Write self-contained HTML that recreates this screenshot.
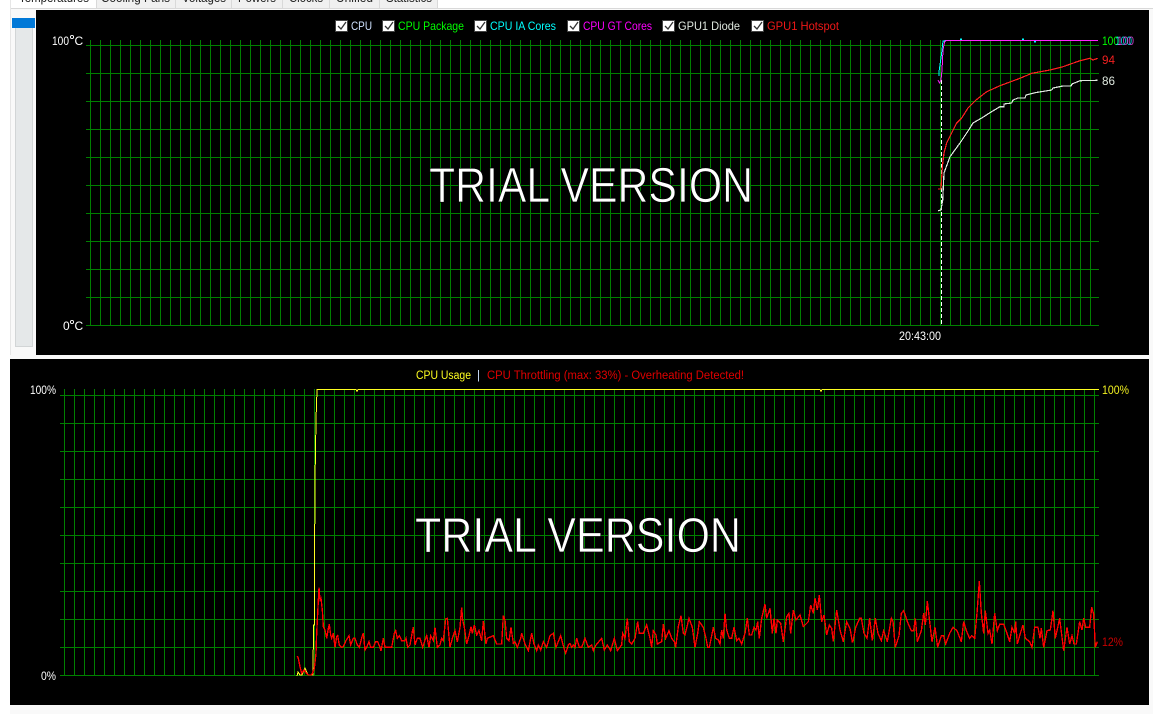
<!DOCTYPE html>
<html><head><meta charset="utf-8"><title>Sensor graphs</title>
<style>
html,body{margin:0;padding:0;background:#fff;}
#r{position:relative;width:1153px;height:714px;overflow:hidden;background:#f9f9f9;font-family:"Liberation Sans",sans-serif;}
.a{position:absolute;}
svg{position:absolute;left:0;top:0;}
text{font-family:"Liberation Sans",sans-serif;font-size:12px;}
.t{font-size:12.5px;fill:#222;}
.tr{font-size:49px;fill:#fff;stroke:#000;stroke-width:.7px;}
</style></head><body>
<div id="r">
<div class="a" style="left:0;top:0;width:10px;height:714px;background:#fff"></div>
<div class="a" style="left:0;top:0;width:1153px;height:9px;background:#fff"></div>
<div class="a" style="left:10px;top:8px;width:1143px;height:1px;background:#d9d9d9"></div>
<div class="a" style="left:10px;top:0;width:1px;height:355px;background:#e6e6e6"></div>
<div class="a" style="left:96px;top:0;width:79px;height:8px;background:#f0f0f0;border-left:1px solid #d9d9d9"></div>
<div class="a" style="left:175px;top:0;width:56px;height:8px;background:#f0f0f0;border-left:1px solid #d9d9d9"></div>
<div class="a" style="left:231px;top:0;width:51px;height:8px;background:#f0f0f0;border-left:1px solid #d9d9d9"></div>
<div class="a" style="left:282px;top:0;width:47px;height:8px;background:#f0f0f0;border-left:1px solid #d9d9d9"></div>
<div class="a" style="left:329px;top:0;width:50px;height:8px;background:#f0f0f0;border-left:1px solid #d9d9d9"></div>
<div class="a" style="left:379px;top:0;width:57px;height:8px;background:#f0f0f0;border-left:1px solid #d9d9d9;border-right:1px solid #d9d9d9"></div>
<div class="a" style="left:12px;top:18px;width:23px;height:10px;background:#0078d7"></div>
<div class="a" style="left:15px;top:28px;width:16px;height:318px;background:#e5e8e9;border:1px solid #d2d5d6;border-top:0"></div>

<div class="a" style="left:36px;top:10px;width:1113px;height:345px;background:#000"></div>
<div class="a" style="left:10px;top:359px;width:1139px;height:346px;background:#000"></div>

<svg width="1153" height="714" viewBox="0 0 1153 714">
<g fill="none" stroke="#008000" stroke-width="1" shape-rendering="crispEdges">
<path d="M90.5 40v285
m10-285v285m10-285v285m10-285v285m10-285v285m10-285v285m10-285v285m10-285v285m10-285v285m10-285v285m10-285v285
m10-285v285m10-285v285m10-285v285m10-285v285m10-285v285m10-285v285m10-285v285m10-285v285m10-285v285m10-285v285
m10-285v285m10-285v285m10-285v285m10-285v285m10-285v285m10-285v285m10-285v285m10-285v285m10-285v285m10-285v285
m10-285v285m10-285v285m10-285v285m10-285v285m10-285v285m10-285v285m10-285v285m10-285v285m10-285v285m10-285v285
m10-285v285m10-285v285m10-285v285m10-285v285m10-285v285m10-285v285m10-285v285m10-285v285m10-285v285m10-285v285
m10-285v285m10-285v285m10-285v285m10-285v285m10-285v285m10-285v285m10-285v285m10-285v285m10-285v285m10-285v285
m10-285v285m10-285v285m10-285v285m10-285v285m10-285v285m10-285v285m10-285v285m10-285v285m10-285v285m10-285v285
m10-285v285m10-285v285m10-285v285m10-285v285m10-285v285m10-285v285m10-285v285m10-285v285m10-285v285m10-285v285
m10-285v285m10-285v285m10-285v285m10-285v285m10-285v285m10-285v285m10-285v285m10-285v285m10-285v285m10-285v285
m10-285v285m10-285v285m10-285v285m10-285v285m10-285v285m10-285v285m10-285v285m10-285v285m10-285v285m10-285v285"/>
<path d="M86 45.5h1013m-1013 28h1013m-1013 28h1013m-1013 28h1013m-1013 28h1013m-1013 28h1013m-1013 28h1013m-1013 28h1013m-1013 28h1013m-1013 28h1013m-1013 28h1013"/>
<path d="M64.5 389v286
m10-286v286m10-286v286m10-286v286m10-286v286m10-286v286m10-286v286m10-286v286m10-286v286m10-286v286m10-286v286
m10-286v286m10-286v286m10-286v286m10-286v286m10-286v286m10-286v286m10-286v286m10-286v286m10-286v286m10-286v286
m10-286v286m10-286v286m10-286v286m10-286v286m10-286v286m10-286v286m10-286v286m10-286v286m10-286v286m10-286v286
m10-286v286m10-286v286m10-286v286m10-286v286m10-286v286m10-286v286m10-286v286m10-286v286m10-286v286m10-286v286
m10-286v286m10-286v286m10-286v286m10-286v286m10-286v286m10-286v286m10-286v286m10-286v286m10-286v286m10-286v286
m10-286v286m10-286v286m10-286v286m10-286v286m10-286v286m10-286v286m10-286v286m10-286v286m10-286v286m10-286v286
m10-286v286m10-286v286m10-286v286m10-286v286m10-286v286m10-286v286m10-286v286m10-286v286m10-286v286m10-286v286
m10-286v286m10-286v286m10-286v286m10-286v286m10-286v286m10-286v286m10-286v286m10-286v286m10-286v286m10-286v286
m10-286v286m10-286v286m10-286v286m10-286v286m10-286v286m10-286v286m10-286v286m10-286v286m10-286v286m10-286v286
m10-286v286m10-286v286m10-286v286m10-286v286m10-286v286m10-286v286m10-286v286m10-286v286m10-286v286m10-286v286
m10-286v286m10-286v286m10-286v286"/>
<path d="M60 395.5h1039m-1039 28h1039m-1039 28h1039m-1039 28h1039m-1039 28h1039m-1039 28h1039m-1039 28h1039m-1039 28h1039m-1039 28h1039m-1039 28h1039m-1039 28h1039"/>
</g>
<g class="tabs">
<text class="t" x="19" y="2" textLength="70" lengthAdjust="spacingAndGlyphs">Temperatures</text>
<text class="t" x="101" y="2" textLength="69" lengthAdjust="spacingAndGlyphs">Cooling Fans</text>
<text class="t" x="182" y="2" textLength="44" lengthAdjust="spacingAndGlyphs">Voltages</text>
<text class="t" x="238" y="2" textLength="38" lengthAdjust="spacingAndGlyphs">Powers</text>
<text class="t" x="289" y="2" textLength="34" lengthAdjust="spacingAndGlyphs">Clocks</text>
<text class="t" x="336" y="2" textLength="37" lengthAdjust="spacingAndGlyphs">Unified</text>
<text class="t" x="386" y="2" textLength="46" lengthAdjust="spacingAndGlyphs">Statistics</text>
</g>

<text class="tr" x="429" y="202" textLength="324" lengthAdjust="spacingAndGlyphs">TRIAL VERSION</text>
<text class="tr" x="415" y="552" textLength="326" lengthAdjust="spacingAndGlyphs">TRIAL VERSION</text>

<g fill="#fff" stroke="#444" stroke-width="1" shape-rendering="crispEdges">
<rect x="335.5" y="20.5" width="12" height="11"/><rect x="382.5" y="20.5" width="12" height="11"/><rect x="474.5" y="20.5" width="12" height="11"/><rect x="567.5" y="20.5" width="12" height="11"/><rect x="662.5" y="20.5" width="12" height="11"/><rect x="751.5" y="20.5" width="12" height="11"/>
</g>
<g fill="none" stroke="#333" stroke-width="1.3">
<path d="M338 26l3 3 5-7"/><path d="M385 26l3 3 5-7"/><path d="M477 26l3 3 5-7"/><path d="M570 26l3 3 5-7"/><path d="M665 26l3 3 5-7"/><path d="M754 26l3 3 5-7"/>
</g>
<text x="351" y="30" fill="#cfe2ff" textLength="21" lengthAdjust="spacingAndGlyphs">CPU</text>
<text x="398" y="30" fill="#00ff00" textLength="66" lengthAdjust="spacingAndGlyphs">CPU Package</text>
<text x="490" y="30" fill="#00ffff" textLength="66" lengthAdjust="spacingAndGlyphs">CPU IA Cores</text>
<text x="583" y="30" fill="#ff00ff" textLength="69" lengthAdjust="spacingAndGlyphs">CPU GT Cores</text>
<text x="678" y="30" fill="#dfe8df" textLength="62" lengthAdjust="spacingAndGlyphs">GPU1 Diode</text>
<text x="767" y="30" fill="#f01818" textLength="72" lengthAdjust="spacingAndGlyphs">GPU1 Hotspot</text>

<text x="52" y="45" fill="#fff" textLength="17" lengthAdjust="spacingAndGlyphs">100</text>
<circle cx="72" cy="37" r="1.6" fill="none" stroke="#fff" stroke-width=".9"/><text x="74.5" y="45" fill="#fff">C</text>
<text x="63" y="330" fill="#fff">0</text>
<circle cx="72" cy="322" r="1.6" fill="none" stroke="#fff" stroke-width=".9"/><text x="74.5" y="330" fill="#fff">C</text>
<text x="899" y="340" fill="#fff" textLength="42" lengthAdjust="spacingAndGlyphs">20:43:00</text>

<text x="1102" y="45" fill="#00ff00" textLength="17" lengthAdjust="spacingAndGlyphs">100</text>
<text x="1115" y="45" fill="#00ffff" textLength="17" lengthAdjust="spacingAndGlyphs" opacity=".8">100</text>
<text x="1117" y="45" fill="#ff50ff" textLength="17" lengthAdjust="spacingAndGlyphs" opacity=".75">100</text>
<text x="1102" y="64" fill="#f02020" textLength="13" lengthAdjust="spacingAndGlyphs">94</text>
<text x="1102" y="85" fill="#dfe8df" textLength="13" lengthAdjust="spacingAndGlyphs">86</text>

<text x="416" y="379" fill="#ffff20" style="font-size:11.5px" textLength="55" lengthAdjust="spacingAndGlyphs">CPU Usage</text>
<text x="477" y="379" fill="#cfe2ff" style="font-size:11.5px">|</text>
<text x="487" y="379" fill="#e00000" style="font-size:11.5px" textLength="257" lengthAdjust="spacingAndGlyphs">CPU Throttling (max: 33%) - Overheating Detected!</text>
<text x="30" y="394" fill="#fff" textLength="26" lengthAdjust="spacingAndGlyphs">100%</text>
<text x="41" y="680" fill="#fff" textLength="15" lengthAdjust="spacingAndGlyphs">0%</text>
<text x="1102" y="394" fill="#f0f020" textLength="27" lengthAdjust="spacingAndGlyphs">100%</text>
<text x="1102" y="646" fill="#c80000" textLength="21" lengthAdjust="spacingAndGlyphs">12%</text>

<g fill="none" shape-rendering="crispEdges">
<path d="M941.5 80V325" stroke="#fff" stroke-width="1" stroke-dasharray="4 2"/>
<polyline stroke="#ff2020" stroke-width="1.2" points="938,189 941,189 941.5,180 942.5,165 944,153 946.7,143 951.7,133 956.7,123 961.7,118 968,108 976,100 986.7,91.7 1000,85.7 1020,78.3 1031.7,73.3 1050,70 1063,66.7 1080,60.7 1090,58.3 1093,60 1097.7,58.3"/>
<polyline stroke="#dfe8df" stroke-width="1.2" points="938,210.7 941,210 942.7,200 944,173 950,156.7 960,143 970,128 973,123 981.7,118 990,112.7 1000,106.7 1004,106.7 1004,104 1011.7,103 1013,100 1018,98 1025,98 1026,95 1035,92.7 1051.7,90 1053,88 1063,86 1071,86 1072,84 1080,80.7 1097.7,80.3"/>
<polyline stroke="#00ffff" points="939,76 939,72 940,65 941,58 942,50 943,41 946,40.5 960,40.5 961,38.5 962,40.5 1022,40.5 1023,38.5 1024,40.5 1034,40.5 1035,42.5 1036,40.5 1098,40.5"/>
<polyline stroke="#ff20ff" stroke-width="1" points="938,80 939.5,83 941,80 942,70 943,50 944.5,42 946,40.5 1098,40.5"/>
<polyline stroke="#ffff20" points="297,676 298,672 300,675 302,675 305,668 308,675 313,675 313.5,625 314.5,625 314.5,570 315,480 316,420 317,389.5 356,389.5 357,391.5 358,389.5 820,389.5 821,391.5 822,389.5 1099,389.5"/>
</g>
<g fill="none" stroke="#ff0000" stroke-width="4" shape-rendering="crispEdges">
<polyline transform="translate(280,570) scale(.33333)" points="52,258 55,265 60,290 65,310 72,300 80,310 85,315 95,315 103,295 108,250 110,190 113,130 117,52 120,90 123,85 127,120 130,170 135,180 140,205 145,175 148,163 152,195 155,205 160,190 165,232 170,200 173,197 178,225 185,232 190,230 198,212 207,197 212,225 220,205 225,205 232,225 238,232 247,197 250,190 255,240 260,232 267,215 272,232 280,232 287,215 293,215 300,232 303,243 310,205 315,232 335,232 343,190 347,182 352,205 358,197 365,212 375,212 378,205 383,232 390,225 397,185 400,172 405,225 412,205 420,205 428,232 437,205 440,197 447,232 452,197 460,212 465,172 472,232 480,225 485,205 490,212 497,147 502,145 510,232 517,205 525,182 532,215 540,172 545,112 548,150 553,172 560,222 567,197 573,170 577,190 583,165 590,195 597,182 605,212 610,153 618,222 622,205 640,197 650,222 665,222 670,137 675,150 680,205 687,212 693,172 700,220 705,215 712,232 722,205 725,190 735,222 745,242 755,190 762,222 770,242 775,225 782,240 790,215 800,232 810,197 820,190 828,232 842,197 852,235 857,250 865,225 870,220"/>
<polyline transform="translate(570,570) scale(.33333)" points="0,220 5,232 10,225 15,232 20,205 28,232 35,232 45,205 55,232 65,225 70,242 78,225 95,205 103,240 112,225 122,242 133,205 142,242 155,225 158,190 165,205 172,145 178,215 185,222 195,205 203,155 208,190 220,190 230,165 240,205 245,232 250,182 258,195 262,222 275,215 280,162 287,205 297,182 305,205 313,215 317,232 325,170 333,137 340,190 345,195 357,145 367,172 375,232 383,190 388,155 400,172 408,205 413,232 418,232 430,172 437,205 445,210 450,222 455,180 460,205 465,130 470,180 478,205 485,205 492,172 500,212 507,205 515,222 525,190 532,145 538,195 545,195 552,172 558,180 563,155 568,205 575,145 585,102 590,145 600,115 607,190 612,145 618,190 622,150 632,160 640,215 650,140 657,130 662,190 670,120 678,150 690,135 700,170 715,155 722,105 730,130 735,85 742,120 748,75 755,155 762,135 770,195 778,165 785,175 790,215 800,120 810,180 820,215 830,155 840,175 847,215 849,215"/>
<polyline transform="translate(853,570) scale(.33333)" points="-4,215 0,215 8,172 20,145 25,145 33,190 42,205 50,145 58,212 67,145 75,190 85,212 92,182 103,215 115,145 120,155 127,232 138,197 145,130 152,122 165,160 175,182 182,182 187,145 193,215 205,182 212,130 217,165 223,93 230,155 237,215 246,172 254,232 265,197 272,197 278,222 290,190 300,172 312,182 325,215 332,155 340,182 350,205 356,197 365,205 372,130 379,33 385,130 392,190 397,122 405,190 410,180 417,222 425,130 433,182 440,163 452,163 462,190 470,215 477,172 485,190 488,155 493,222 502,190 510,165 517,205 530,215 537,232 545,172 555,172 561,205 565,175 572,232 582,182 592,180 600,122 607,205 620,145 632,242 642,172 650,222 657,197 663,222 670,222 680,155 687,180 692,145 698,172 710,172 716,112 722,132 727,232 733,215"/>
</g>
</svg>
</div>
</body></html>
